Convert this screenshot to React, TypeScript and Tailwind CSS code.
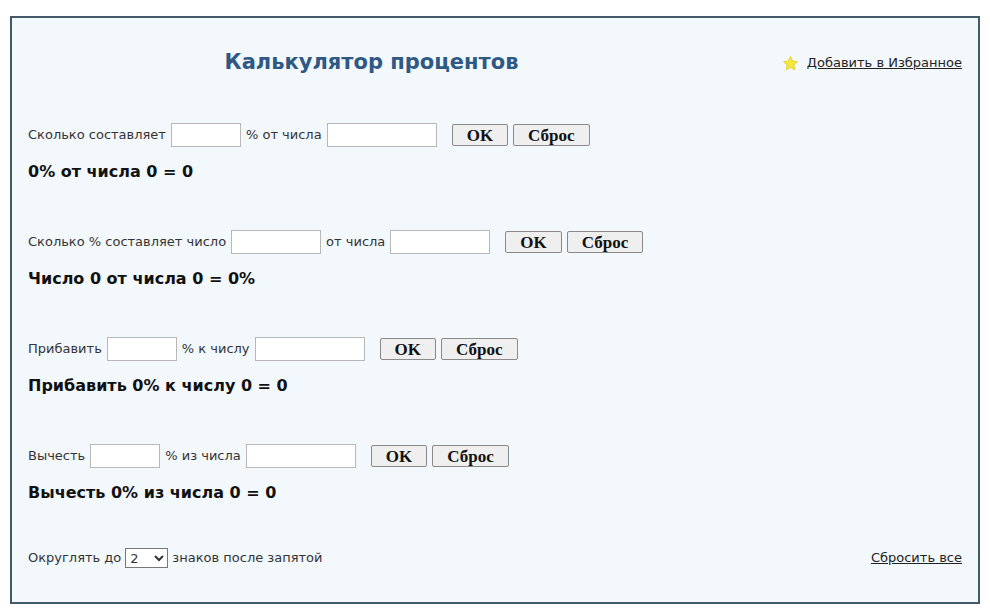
const inp = "h-[24px] border border-[#b8b8b8] bg-white mx-[5px]";
const btn = "h-[22px] border border-[#8a8a8a] bg-[#efefef] rounded-[2px] font-bold text-[17px] leading-none px-[14px] text-[#111]";
const serif = { fontFamily: '"Liberation Serif", serif' };

function Row({ parts, result }: { parts: (string | number)[]; result: string }) {
  return (
    <div className="h-[107px]">
      <div className="flex items-center h-[24px] text-[13px] text-[#333]">
        {parts.map((p, i) =>
          typeof p === "number" ? (
            <input key={i} className={inp} style={{ width: p }} />
          ) : (
            <span key={i}>{p}</span>
          )
        )}
        <div className="flex gap-[5px] ml-[10px]">
          <button className={btn} style={serif}>OK</button>
          <button className={btn} style={serif}>Сброс</button>
        </div>
      </div>
      <div className="mt-[13px] font-bold text-[16px] text-[#111]">{result}</div>
    </div>
  );
}

export default function App() {
  return (
    <div className="w-[990px] h-[611px] bg-white pt-[16px] pl-[10px]" style={{ fontFamily: '"DejaVu Sans", Verdana, sans-serif' }}>
      <div className="w-[970px] h-[588px] border-2 border-[#435a69] bg-[#f3f8fd] px-[16px]">
        <div className="flex items-center h-[94px] pb-[4px]">
          <div className="w-[687px] text-center text-[21px] font-bold text-[#2f5884]">Калькулятор процентов</div>
          <div className="flex-1 flex justify-end items-center gap-[8px] text-[13px] text-[#222]">
            <svg width="17" height="17" viewBox="0 0 24 24"><path d="M12 2l3 6.5 7 .8-5.2 4.8 1.5 7L12 17.6 5.7 21.1l1.5-7L2 9.3l7-.8z" fill="#f5e63a" stroke="#e0c820" strokeWidth="1"/></svg>
            <span className="underline">Добавить в Избранное</span>
          </div>
        </div>
        <div className="pt-[11px]">
          <Row parts={["Сколько составляет", 70, "% от числа", 110]} result="0% от числа 0 = 0" />
          <Row parts={["Сколько % составляет число", 90, "от числа", 100]} result="Число 0 от числа 0 = 0%" />
          <Row parts={["Прибавить", 70, "% к числу", 110]} result="Прибавить 0% к числу 0 = 0" />
          <Row parts={["Вычесть", 70, "% из числа", 110]} result="Вычесть 0% из числа 0 = 0" />
        </div>
        <div className="flex items-center justify-between text-[13px] text-[#333] mt-[-3px]">
          <div className="flex items-center">
            Округлять до
            <select className="mx-[4px] h-[20px] w-[43px] border border-[#777] bg-white text-[13px]"><option>2</option></select>
            знаков после запятой
          </div>
          <span className="underline text-[#222]">Сбросить все</span>
        </div>
      </div>
    </div>
  );
}
